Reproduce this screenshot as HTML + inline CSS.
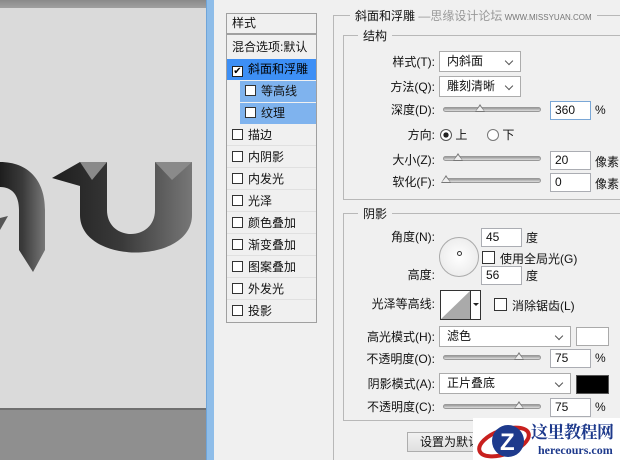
<!DOCTYPE html>
<html><head><meta charset="utf-8"><style>
*{margin:0;padding:0;box-sizing:border-box}
html,body{width:620px;height:460px;overflow:hidden}
body{position:relative;background:#f0f0f0;font-family:"Liberation Sans","Noto Sans CJK SC",sans-serif;font-size:12px;color:#111}
.a{position:absolute;white-space:nowrap}
.row{position:absolute;left:227px;width:89px;height:21px;line-height:21px;padding-left:5px;border-bottom:1px solid #e0e0e0}
.cb{display:inline-block;width:11px;height:11px;border:1px solid #333;background:#fff;vertical-align:-1px;margin-right:5px}
.lbl{position:absolute;text-align:right;width:100px;height:16px;line-height:16px;white-space:nowrap}
.dd{position:absolute;background:#fff;border:1px solid #acacac;height:21px;line-height:19px;padding-left:7px}
.dd:after{content:"";position:absolute;right:8px;top:6px;width:5px;height:5px;border-right:1.5px solid #555;border-bottom:1.5px solid #555;transform:rotate(45deg)}
.in{position:absolute;background:#fff;border:1px solid #abadb3;height:19px;line-height:17px;padding-left:4px;width:41px}
.sl{position:absolute;height:5px;width:98px;border-radius:3px;background:linear-gradient(#9a9a9a,#ddd);border:1px solid #999}
.th{position:absolute;width:10px;height:8px;top:-4px}
.th:before{content:"";position:absolute;left:0;top:0;border-left:5px solid transparent;border-right:5px solid transparent;border-bottom:8px solid #777}
.th:after{content:"";position:absolute;left:1px;top:2px;border-left:4px solid transparent;border-right:4px solid transparent;border-bottom:5px solid #eee}
.grp{position:absolute;border:1px solid #b8b8b8}
.gt{position:absolute;background:#f0f0f0;padding:0 5px;font-size:12px;white-space:nowrap}
</style></head><body>
<div class="a" style="left:0;top:0;width:206px;height:460px;background:#dadada"></div>
<div class="a" style="left:0;top:0;width:206px;height:8px;background:linear-gradient(#8a8a8a,#a0a0a0)"></div>
<div class="a" style="left:0;top:408px;width:206px;height:52px;background:#8f8f8f;border-top:2px solid #6f6f6f"></div>
<svg class="a" style="left:0;top:150px" width="206" height="150">
<defs><linearGradient id="g" x1="0" x2="1"><stop offset="0" stop-color="#1e1e1e"/><stop offset=".5" stop-color="#3a3a3a"/><stop offset="1" stop-color="#777"/></linearGradient></defs>
<path d="M0,12 C28,12 45,30 45,60 L45,100 L33,122 L19,100 L19,60 C19,45 12,37 0,37 Z" fill="url(#g)"/>
<path d="M0,68 L8,66 L0,80Z" fill="#555"/>
<path d="M52,28 L80,12 L107,12 L107,60 C107,92 155,92 155,60 L155,12 L192,12 L192,65 C192,115 80,115 80,65 L80,36 Z" fill="url(#g)"/>
<path d="M80,12 L107,12 L92,30 Z M155,12 L192,12 L172,30Z" fill="#8a8a8a"/>
</svg>
<div class="a" style="left:206px;top:0;width:8px;height:460px;background:#8ebde9;border-left:1px solid #6fa4d8"></div>
<div class="a" style="left:226px;top:13px;width:91px;height:310px;border:1px solid #a0a0a0;background:#f0f0f0"></div>
<div class="a" style="left:232px;top:13px;line-height:20px">样式</div>
<div class="a" style="left:227px;top:33px;width:89px;height:2px;border-top:1px solid #a0a0a0;border-bottom:1px solid #a0a0a0"></div>
<div class="a" style="left:232px;top:37px;line-height:20px">混合选项:默认</div>
<div class="row" style="top:59px;background:#3d8ff5;border:none;color:#000"><span class="cb" style="border-color:#222;text-align:center;line-height:9px;font-size:10px">✔</span>斜面和浮雕</div>
<div class="row" style="top:81px;left:240px;width:76px;background:#7fb3ee;border:none"><span class="cb"></span>等高线</div>
<div class="row" style="top:103px;left:240px;width:76px;background:#7fb3ee;border:none"><span class="cb"></span>纹理</div>
<div class="row" style="top:125px"><span class="cb"></span>描边</div>
<div class="row" style="top:147px"><span class="cb"></span>内阴影</div>
<div class="row" style="top:169px"><span class="cb"></span>内发光</div>
<div class="row" style="top:191px"><span class="cb"></span>光泽</div>
<div class="row" style="top:213px"><span class="cb"></span>颜色叠加</div>
<div class="row" style="top:235px"><span class="cb"></span>渐变叠加</div>
<div class="row" style="top:257px"><span class="cb"></span>图案叠加</div>
<div class="row" style="top:279px"><span class="cb"></span>外发光</div>
<div class="row" style="top:301px;border:none"><span class="cb"></span>投影</div>

<div class="grp" style="left:333px;top:15px;width:300px;height:460px"></div>
<div class="gt" style="left:350px;top:7px">斜面和浮雕 <span style="color:#999">—思缘设计论坛</span><span style="color:#777;font-size:8px"> WWW.MISSYUAN.COM</span></div>
<div class="grp" style="left:343px;top:35px;width:290px;height:165px"></div>
<div class="gt" style="left:358px;top:27px">结构</div>
<div class="lbl" style="left:335px;top:54px">样式(T):</div>
<div class="dd" style="left:439px;top:51px;width:82px">内斜面</div>
<div class="lbl" style="left:335px;top:79px">方法(Q):</div>
<div class="dd" style="left:439px;top:76px;width:82px">雕刻清晰</div>
<div class="lbl" style="left:335px;top:102px">深度(D):</div>
<div class="sl" style="left:443px;top:107px"><div class="th" style="left:31px"></div></div>
<div class="in" style="left:550px;top:101px;border-color:#7aa7d6">360</div><div class="a" style="left:595px;top:103px">%</div>
<div class="lbl" style="left:335px;top:127px">方向:</div>
<div class="a" style="left:440px;top:127px;line-height:16px"><span style="display:inline-block;width:12px;height:12px;border:1px solid #555;border-radius:50%;background:radial-gradient(#222 35%,#fff 40%);vertical-align:-2px"></span> 上</div>
<div class="a" style="left:487px;top:127px;line-height:16px"><span style="display:inline-block;width:12px;height:12px;border:1px solid #777;border-radius:50%;background:#fff;vertical-align:-2px"></span> 下</div>
<div class="lbl" style="left:335px;top:152px">大小(Z):</div>
<div class="sl" style="left:443px;top:156px"><div class="th" style="left:9px"></div></div>
<div class="in" style="left:550px;top:151px">20</div><div class="a" style="left:595px;top:153px">像素</div>
<div class="lbl" style="left:335px;top:174px">软化(F):</div>
<div class="sl" style="left:443px;top:178px"><div class="th" style="left:-3px"></div></div>
<div class="in" style="left:550px;top:173px">0</div><div class="a" style="left:595px;top:175px">像素</div>

<div class="grp" style="left:343px;top:213px;width:290px;height:208px"></div>
<div class="gt" style="left:358px;top:205px">阴影</div>
<div class="lbl" style="left:335px;top:229px">角度(N):</div>
<div class="in" style="left:481px;top:228px">45</div><div class="a" style="left:526px;top:229px">度</div>
<div class="a" style="left:439px;top:237px;width:40px;height:40px;border:1px solid #aaa;border-radius:50%;background:radial-gradient(#fff,#e6e6e6)"></div>
<div class="a" style="left:457px;top:251px;width:5px;height:5px;border:1px solid #333;border-radius:50%"></div>
<div class="a" style="left:482px;top:251px;line-height:14px"><span class="cb" style="width:13px;height:13px"></span>使用全局光(G)</div>
<div class="lbl" style="left:335px;top:267px">高度:</div>
<div class="in" style="left:481px;top:266px">56</div><div class="a" style="left:526px;top:267px">度</div>
<div class="lbl" style="left:335px;top:296px">光泽等高线:</div>
<div class="a" style="left:440px;top:290px;width:41px;height:30px;border:1px solid #333;background:#fff"><svg width="29" height="28" style="position:absolute;left:0;top:0"><path d="M0,28 L29,0 L29,28Z" fill="#aaa"/></svg><div style="position:absolute;left:29px;top:0;width:1px;height:28px;background:#333"></div><div style="position:absolute;left:32px;top:12px;border-left:3px solid transparent;border-right:3px solid transparent;border-top:3px solid #222"></div></div>
<div class="a" style="left:494px;top:298px;line-height:14px"><span class="cb" style="width:13px;height:13px"></span>消除锯齿(L)</div>
<div class="lbl" style="left:335px;top:329px">高光模式(H):</div>
<div class="dd" style="left:439px;top:326px;width:132px">滤色</div>
<div class="a" style="left:576px;top:327px;width:33px;height:19px;background:#fff;border:1px solid #aaa"></div>
<div class="lbl" style="left:335px;top:351px">不透明度(O):</div>
<div class="sl" style="left:443px;top:355px"><div class="th" style="left:70px"></div></div>
<div class="in" style="left:550px;top:349px">75</div><div class="a" style="left:595px;top:351px">%</div>
<div class="lbl" style="left:335px;top:376px">阴影模式(A):</div>
<div class="dd" style="left:439px;top:373px;width:132px">正片叠底</div>
<div class="a" style="left:576px;top:375px;width:33px;height:19px;background:#000;border:1px solid #555"></div>
<div class="lbl" style="left:335px;top:399px">不透明度(C):</div>
<div class="sl" style="left:443px;top:404px"><div class="th" style="left:70px"></div></div>
<div class="in" style="left:550px;top:398px">75</div><div class="a" style="left:595px;top:400px">%</div>
<div class="a" style="left:407px;top:432px;width:80px;height:20px;border:1px solid #adadad;background:linear-gradient(#f2f2f2,#e0e0e0);line-height:18px;padding-left:12px">设置为默认</div>

<div class="a" style="left:473px;top:418px;width:147px;height:42px;background:#fff"></div>
<svg class="a" style="left:474px;top:418px" width="60" height="42"><ellipse cx="30" cy="24" rx="26" ry="12" fill="none" stroke="#c8201e" stroke-width="4" transform="rotate(-20 30 24)"/><circle cx="34" cy="23" r="16" fill="#1e3a8c"/><text x="26" y="32" font-family="Liberation Sans" font-weight="bold" font-size="24" fill="#fff">Z</text></svg>
<div class="a" style="left:531px;top:419px;font-family:'Noto Serif CJK SC',serif;font-weight:bold;font-size:17px;letter-spacing:-0.5px;color:#1e3a8c;line-height:24px">这里教程网</div>
<div class="a" style="left:538px;top:443px;font-family:'Liberation Serif',serif;font-weight:bold;font-size:12px;color:#1e3a8c">herecours.com</div>
</body></html>
